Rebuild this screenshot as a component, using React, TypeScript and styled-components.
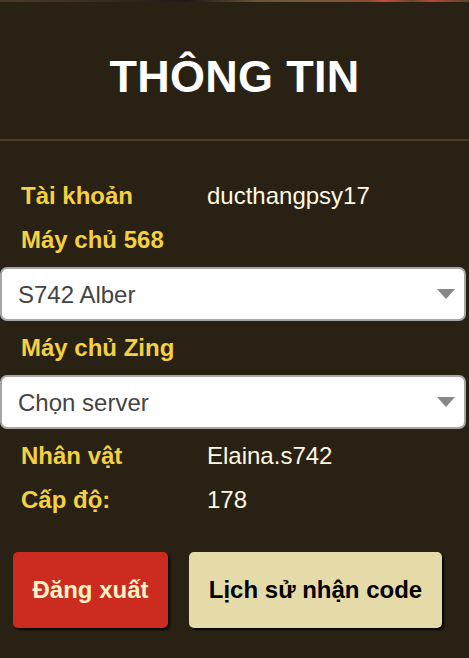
import React, { useState } from "react";
import styled, { createGlobalStyle } from "styled-components";

const GlobalStyle = createGlobalStyle`
  html, body {
    margin: 0;
    padding: 0;
    background: #2a2115;
  }
  * {
    box-sizing: border-box;
  }
`;

const SERVERS_568 = ["S742 Alber", "S741 Cirrus", "S740 Noctis"];
const SERVERS_ZING = ["Chọn server", "Z101 Lumen", "Z102 Ardent"];

export default function App() {
  const [server568, setServer568] = useState(SERVERS_568[0]);
  const [serverZing, setServerZing] = useState(SERVERS_ZING[0]);

  return (
    <>
      <GlobalStyle />
      <Panel>
        <TopStrip />
        <Header>
          <Title>THÔNG TIN</Title>
        </Header>
        <Body>
          <InfoRow>
            <Label>Tài khoản</Label>
            <Value>ducthangpsy17</Value>
          </InfoRow>
          <InfoRow>
            <Label>Máy chủ 568</Label>
          </InfoRow>
          <SelectBox>
            <Select value={server568} onChange={(e) => setServer568(e.target.value)}>
              {SERVERS_568.map((s) => (
                <option key={s}>{s}</option>
              ))}
            </Select>
            <Caret />
          </SelectBox>
          <InfoRow>
            <Label>Máy chủ Zing</Label>
          </InfoRow>
          <SelectBox>
            <Select value={serverZing} onChange={(e) => setServerZing(e.target.value)}>
              {SERVERS_ZING.map((s) => (
                <option key={s}>{s}</option>
              ))}
            </Select>
            <Caret />
          </SelectBox>
          <InfoRow>
            <Label>Nhân vật</Label>
            <Value>Elaina.s742</Value>
          </InfoRow>
          <InfoRow>
            <Label>Cấp độ:</Label>
            <Value>178</Value>
          </InfoRow>
        </Body>
        <Actions>
          <ActionButton variant="danger">Đăng xuất</ActionButton>
          <ActionButton variant="light">Lịch sử nhận code</ActionButton>
        </Actions>
      </Panel>
    </>
  );
}

const Panel = styled.div`
  width: 469px;
  height: 658px;
  background: #2a2115;
  font-family: "Liberation Sans", Arial, sans-serif;
  overflow: hidden;
`;

const TopStrip = styled.div`
  height: 2px;
  background: linear-gradient(
    90deg,
    #4a3a28 0%,
    #3a2e22 20%,
    #1e1a18 40%,
    #6a5438 55%,
    #7a5c3c 70%,
    #8a4a30 78%,
    #c0503a 82%,
    #6a4630 88%,
    #b04a38 92%,
    #5a4230 100%
  );
`;

const Header = styled.div`
  height: 139px;
  display: flex;
  align-items: center;
  justify-content: center;
  border-bottom: 2px solid #4a3c29;
  padding-top: 13px;
`;

const Title = styled.h1`
  margin: 0;
  color: #ffffff;
  font-size: 45px;
  font-weight: 700;
  letter-spacing: 0.3px;
`;

const Body = styled.div`
  display: flex;
  flex-direction: column;
  padding-top: 33px;
`;

const InfoRow = styled.div`
  display: flex;
  align-items: center;
  height: 44px;
  padding-left: 21px;
`;

const Label = styled.div`
  width: 186px;
  color: #f4d140;
  font-size: 24px;
  font-weight: 700;
`;

const Value = styled.div`
  color: #fff8e0;
  font-size: 24px;
`;

const SelectBox = styled.div`
  position: relative;
  width: 466px;
  height: 54px;
  margin: 5px 0;
`;

const Select = styled.select`
  appearance: none;
  width: 100%;
  height: 100%;
  border: 2px solid #a6a6a6;
  border-radius: 7px;
  background: #ffffff;
  color: #444444;
  font-family: "Liberation Sans", Arial, sans-serif;
  font-size: 24px;
  padding: 0 40px 0 16px;
  outline: none;
`;

const Caret = styled.span`
  position: absolute;
  right: 11px;
  top: 50%;
  margin-top: -5px;
  width: 0;
  height: 0;
  border-left: 9px solid transparent;
  border-right: 9px solid transparent;
  border-top: 10px solid #888888;
  pointer-events: none;
`;

const Actions = styled.div`
  display: flex;
  gap: 21px;
  padding: 30px 0 0 13px;
`;

const ActionButton = styled.button<{ variant: "danger" | "light" }>`
  height: 76px;
  padding: 0 10px;
  border: none;
  border-radius: 5px;
  font-family: "Liberation Sans", Arial, sans-serif;
  font-size: 24px;
  font-weight: 700;
  cursor: pointer;
  box-shadow: 2px 2px 2px rgba(0, 0, 0, 0.85);
  width: ${(p) => (p.variant === "danger" ? "155px" : "253px")};
  background: ${(p) => (p.variant === "danger" ? "#cc2b20" : "#e4dba9")};
  color: ${(p) => (p.variant === "danger" ? "#fff3c6" : "#000000")};
`;
